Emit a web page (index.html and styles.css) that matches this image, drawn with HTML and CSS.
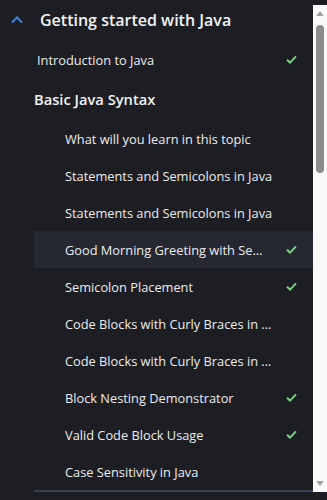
FILE: index.html
```html
<!DOCTYPE html>
<html lang="en">
<head>
    <meta charset="UTF-8">
    <meta name="viewport" content="width=device-width, initial-scale=1.0">
    <title>Course Outline</title>
    <link rel="stylesheet" href="styles.css">
</head>
<body>
    <div class="panel">
        <div class="outline">
            <div class="chapter-head">
                <svg class="chevron" width="12" height="8" viewBox="0 0 12 8"><path d="M1 6.5 L6 1.5 L11 6.5" fill="none" stroke="#3f82d8" stroke-width="2"/></svg>
                <span>Getting started with Java</span>
            </div>

            <div class="chapter-body">
                <div class="row lesson">
                    <span class="label">Introduction to Java</span>
                    <svg class="check" width="11" height="9" viewBox="0 0 11 9"><path d="M1 4.8 L4 7.6 L10 1.4" fill="none" stroke="#74d67f" stroke-width="2"/></svg>
                </div>

                <div class="topic">Basic Java Syntax</div>

                <div class="row item"><span class="label">What will you learn in this topic</span><span class="check"></span></div>
                <div class="row item"><span class="label">Statements and Semicolons in Java</span><span class="check"></span></div>
                <div class="row item"><span class="label">Statements and Semicolons in Java</span><span class="check"></span></div>
                <div class="row item active" title="Good Morning Greeting with Semicolons">
                    <span class="label">Good Morning Greeting with Se...</span>
                    <svg class="check" width="11" height="9" viewBox="0 0 11 9"><path d="M1 4.8 L4 7.6 L10 1.4" fill="none" stroke="#74d67f" stroke-width="2"/></svg>
                </div>
                <div class="row item">
                    <span class="label">Semicolon Placement</span>
                    <svg class="check" width="11" height="9" viewBox="0 0 11 9"><path d="M1 4.8 L4 7.6 L10 1.4" fill="none" stroke="#74d67f" stroke-width="2"/></svg>
                </div>
                <div class="row item" title="Code Blocks with Curly Braces in Java"><span class="label">Code Blocks with Curly Braces in ...</span><span class="check"></span></div>
                <div class="row item" title="Code Blocks with Curly Braces in Java"><span class="label">Code Blocks with Curly Braces in ...</span><span class="check"></span></div>
                <div class="row item">
                    <span class="label">Block Nesting Demonstrator</span>
                    <svg class="check" width="11" height="9" viewBox="0 0 11 9"><path d="M1 4.8 L4 7.6 L10 1.4" fill="none" stroke="#74d67f" stroke-width="2"/></svg>
                </div>
                <div class="row item">
                    <span class="label">Valid Code Block Usage</span>
                    <svg class="check" width="11" height="9" viewBox="0 0 11 9"><path d="M1 4.8 L4 7.6 L10 1.4" fill="none" stroke="#74d67f" stroke-width="2"/></svg>
                </div>
                <div class="row item"><span class="label">Case Sensitivity in Java</span><span class="check"></span></div>

                <div class="divider"></div>
            </div>
        </div>

        <div class="scrollbar">
            <span class="arrow up"></span>
            <div class="track">
                <div class="thumb"></div>
            </div>
            <span class="arrow down"></span>
        </div>
    </div>
</body>
</html>
```

FILE: styles.css
```css
* {
    box-sizing: border-box;
}

body {
    margin: 0;
    padding-top: 5px;
    height: 100vh;
    background-color: #1d1e23;
    font-family: "Open Sans", "Noto Sans", sans-serif;
    color: #ececee;
}

.panel {
    display: flex;
    height: 487px;
}

.outline {
    flex: 1;
    min-width: 0;
    overflow: hidden;
}

.chapter-head {
    display: flex;
    align-items: center;
    height: 30px;
    margin-bottom: 6px;
    padding-left: 11px;
    font-size: 16px;
    font-weight: 600;
    color: #f2f2f4;
}

.chevron {
    margin-right: 17px;
}

.chapter-body {
    margin-left: 34px;
}

.row {
    display: flex;
    align-items: center;
    height: 37px;
    padding-right: 16px;
    font-size: 12.8px;
}

.row .label {
    flex: 1;
    min-width: 0;
    white-space: nowrap;
    overflow: hidden;
    text-overflow: ellipsis;
}

.row .check {
    flex: none;
    width: 11px;
    margin-left: 8px;
}

.lesson {
    padding-left: 3px;
}

.item {
    padding-left: 31px;
}

.item.active {
    background-color: #252731;
}

.topic {
    display: flex;
    align-items: center;
    height: 42px;
    font-size: 14.7px;
    font-weight: 600;
    color: #f2f2f4;
}

.divider {
    height: 2px;
    background-color: #394155;
}

/* drawn scrollbar */
.scrollbar {
    flex: none;
    width: 14px;
    display: flex;
    flex-direction: column;
    align-items: center;
    background-color: #fafafa;
}

.arrow {
    width: 0;
    height: 0;
    border-left: 4px solid transparent;
    border-right: 4px solid transparent;
}

.arrow.up {
    margin-top: 6px;
    border-bottom: 5px solid #a3a3a3;
}

.arrow.down {
    margin-bottom: 6px;
    border-top: 5px solid #a3a3a3;
}

.track {
    flex: 1;
    width: 100%;
    padding: 9px 3px;
}

.thumb {
    height: 148px;
    border-radius: 4px;
    background-color: #8c8c8c;
}
```
